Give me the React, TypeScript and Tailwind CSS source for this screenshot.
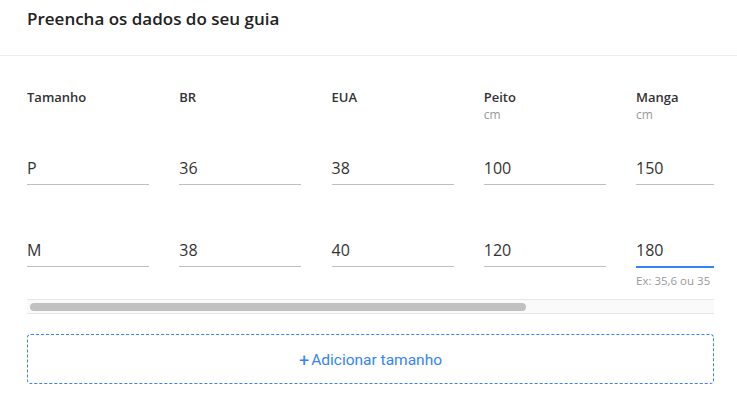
import React from 'react';

type Col = { label: string; unit?: string };

const cols: Col[] = [
  { label: 'Tamanho' },
  { label: 'BR' },
  { label: 'EUA' },
  { label: 'Peito', unit: 'cm' },
  { label: 'Manga', unit: 'cm' },
];

const rows = [
  ['P', '36', '38', '100', '150'],
  ['M', '38', '40', '120', '180'],
];

export default function App() {
  return (
    <div className="w-[737px] h-[407px] bg-white text-[#333] font-['Open_Sans',sans-serif] overflow-hidden">
      {/* Header */}
      <div className="h-[56px] border-b border-[#ededed] px-[27px] pt-[8px]">
        <h1 className="text-[17px] leading-[22px] font-semibold text-[#222]">Preencha os dados do seu guia</h1>
      </div>

      {/* Table */}
      <div className="mx-[27px] w-[687px] overflow-hidden">
        <div className="grid grid-cols-[repeat(5,122px)_200px] gap-x-[30.25px] w-max pt-[33px]">
          {cols.map((c) => (
            <div key={c.label} className="h-[32px]">
              <div className="text-[13px] leading-[16px] font-semibold text-[#333]">{c.label}</div>
              {c.unit && <div className="mt-[3px] text-[12px] leading-[14px] text-[#999]">{c.unit}</div>}
            </div>
          ))}
          <div />

          {rows.map((r, ri) => (
            <React.Fragment key={ri}>
              {r.map((v, ci) => {
                const active = ri === 1 && ci === 4;
                return (
                  <div key={ci} className={ri === 0 ? 'mt-[37px]' : 'mt-[55px]'}>
                    <div
                      className={
                        active
                          ? 'text-[16px] leading-[20px] pb-[6px] border-b-2 border-[#3483fa]'
                          : 'text-[16px] leading-[20px] pb-[6px] border-b border-[#bfbfbf]'
                      }
                    >
                      {v}
                    </div>
                    {ri === 1 && (
                      <div className={active ? 'mt-[6px] text-[11.5px] leading-[14px] text-[#999] whitespace-nowrap' : 'h-[20px]'}>
                        {active ? 'Ex: 35,6 ou 35' : ''}
                      </div>
                    )}
                  </div>
                );
              })}
              <div />
            </React.Fragment>
          ))}
        </div>

        {/* Scrollbar */}
        <div className="mt-[11px] h-[15px] border-y border-[#e8e8e8] bg-[#fafafa] flex items-center px-[3px]">
          <div className="h-[8px] w-[496px] rounded-full bg-[#c1c1c1]" />
        </div>
      </div>

      {/* Add button */}
      <div className="px-[27px] mt-[20px]">
        <button className="w-[687px] h-[50px] pt-[3px] rounded-[4px] border border-dashed border-[#3483fa] text-[#3483fa] text-[15.5px] font-['Roboto',sans-serif] flex items-center justify-center gap-[2px]">
          <span className="text-[18px] leading-none">+</span>
          <span>Adicionar tamanho</span>
        </button>
      </div>
    </div>
  );
}
